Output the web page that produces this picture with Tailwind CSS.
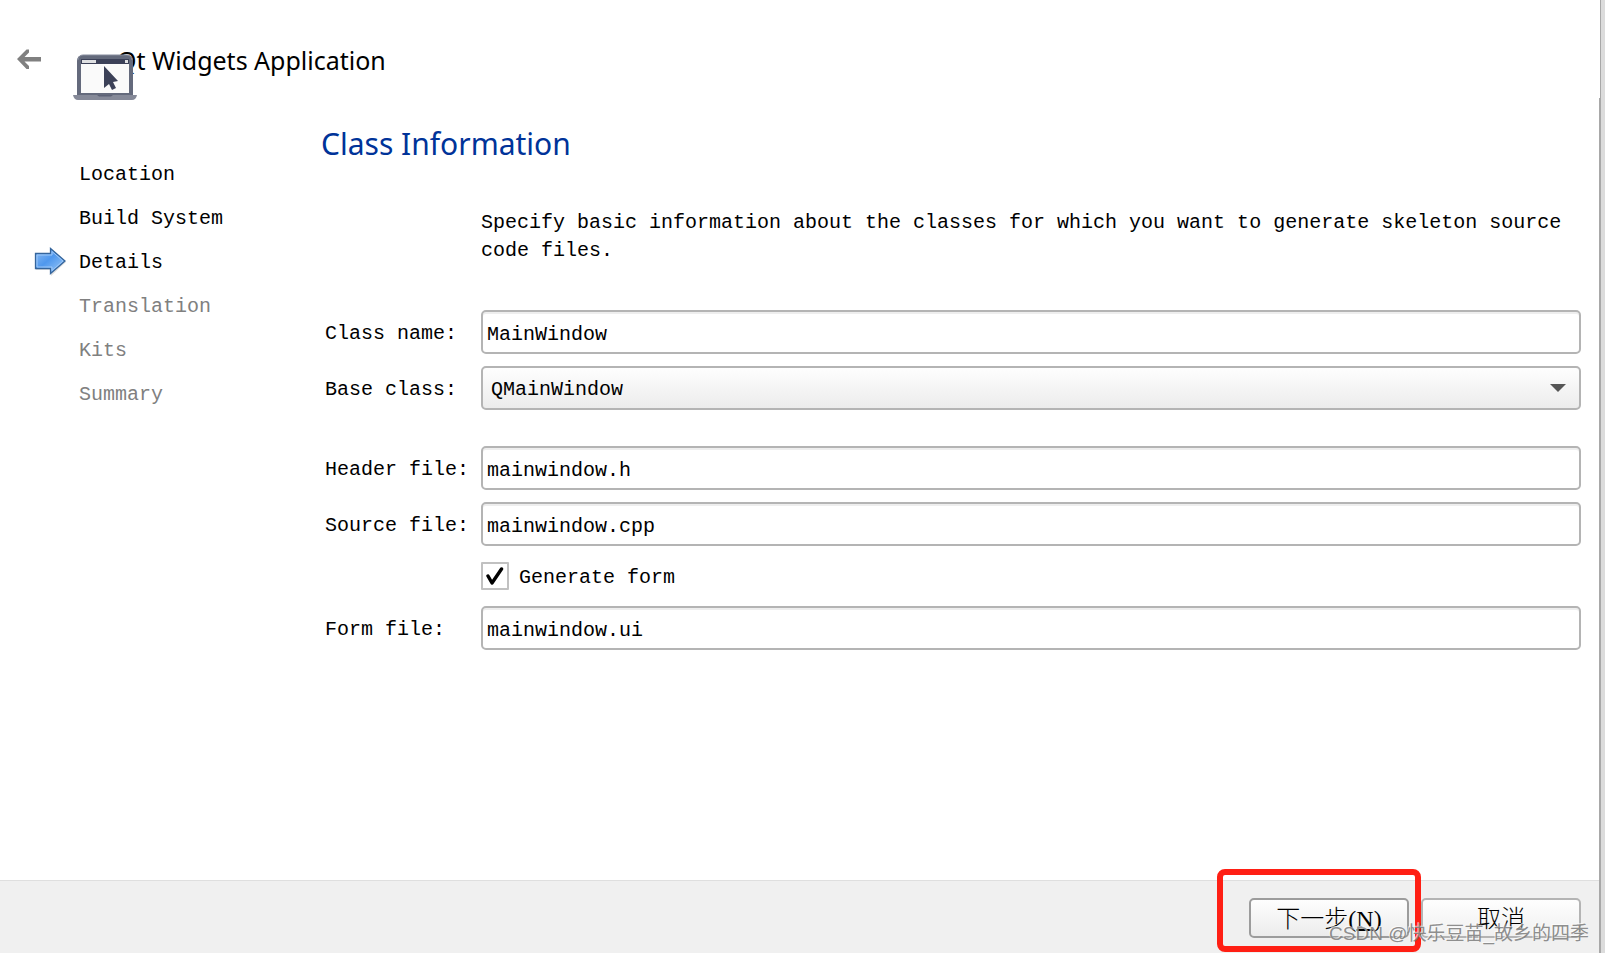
<!DOCTYPE html>
<html lang="zh-CN">
<head>
<meta charset="utf-8">
<title>Qt Widgets Application</title>
<script src="https://cdn.jsdelivr.net/npm/@tailwindcss/browser@4"></script>
</head>
<body class="bg-white">
<div class="relative flex min-h-screen bg-white font-['Liberation_Mono','Noto_Sans_CJK_SC',monospace] text-xl text-black">
  <div class="flex min-w-0 flex-1 flex-col">
    <header class="flex h-[112px] items-start pl-4 pt-[43px]">
      <button type="button" aria-label="Back" class="flex h-8 w-[26px] items-center justify-center">
        <svg class="h-[22px] w-[26px]" viewBox="0 0 26 22"><path d="M1 11 10.500 1.500h2.500v3L8.500 9H25v4.500H8.500L13 18v3h-2.500z" fill="#808080"/></svg>
      </button>
      <svg class="relative z-10 ml-[31px] mt-[10px] h-12 w-[65px] shrink-0" viewBox="0 0 65 48">
        <path d="M4 42V8q0-6 6-6h44q6 0 6 6v34z" fill="#646a7c"/>
        <path d="M5 7q1-5 5-5h44q4 0 5 5" fill="none" stroke="#858b9c" stroke-width="1"/>
        <rect x="8" y="6" width="48" height="34" fill="#fafafa"/>
        <rect x="8" y="6" width="48" height="5" fill="#3c4158"/>
        <rect x="9" y="7" width="14" height="3" fill="#dfe0e2"/>
        <rect x="52" y="7" width="3" height="3" fill="#dfe0e2"/>
        <path d="M31 13v22l5-4 3 6 4-2-3-6 5-1z" fill="#3c4158"/>
        <path d="M0 42h64q-1 5-5 5H5q-4 0-5-5z" fill="#858998"/>
        <path d="M24 42h16l-2 1.500H26z" fill="#5d6276"/>
      </svg>
      <h1 class="-ml-[21px] font-['Noto_Sans','Open_Sans',sans-serif] text-[25px] leading-[34px]">Qt Widgets Application</h1>
    </header>
    <main class="flex flex-1 items-start">
      <nav class="w-[321px] shrink-0 pt-[51px]">
        <ol class="flex flex-col gap-5 pl-[79px] leading-6">
          <li>Location</li>
          <li>Build System</li>
          <li class="-ml-[45px] flex items-center" aria-current="step">
            <svg class="-mb-1 -mt-2 mr-3 h-[29px] w-[33px]" viewBox="0 0 33 29">
              <defs><linearGradient id="arrow" x1="0" y1="0" x2="1" y2="1"><stop offset="0" stop-color="#8fbcf2"/><stop offset=".45" stop-color="#4f98ee"/><stop offset="1" stop-color="#a3cdf7"/></linearGradient></defs>
              <path d="M2 9h14V3l16 12-15 14v-6H2z" fill="#000" opacity=".13"/>
              <path d="M1.500 6.500h15V1.500L31 14 16.500 26.500v-5h-15z" fill="url(#arrow)" stroke="#35659c" stroke-width="1.300"/>
              <path d="M3 8h15V4.500L29 14 18 23.500V20H3z" fill="none" stroke="#9cc7f7" stroke-width="1"/>
            </svg>
            <span>Details</span>
          </li>
          <li class="text-[#808080]">Translation</li>
          <li class="text-[#808080]">Kits</li>
          <li class="text-[#808080]">Summary</li>
        </ol>
      </nav>
      <section class="min-w-0 flex-1 pr-[18px] pt-2">
        <h2 class="font-['Noto_Sans','Open_Sans',sans-serif] text-[30px] leading-12 text-[#003399]">Class Information</h2>
        <form class="mt-[41px] grid grid-cols-[160px_minmax(0,1fr)] items-center">
          <p class="col-start-2 mb-[45px] leading-7">Specify basic information about the classes for which you want to generate skeleton source code files.</p>
          <label for="cls" class="pl-1 pt-[3px]">Class name:</label>
          <input id="cls" type="text" value="MainWindow" class="h-11 w-full rounded-[5px] border-2 border-[#b4b4b4] bg-white pl-1 pt-1 shadow-[inset_0_2px_0_#eeeeee] outline-none">
          <label for="base" class="mt-3 pl-1 pt-[3px]">Base class:</label>
          <div class="relative mt-3">
            <select id="base" class="block h-11 w-full appearance-none rounded-[5px] border-2 border-[#b4b4b4] bg-linear-to-b from-[#fefefe] to-[#ececec] pl-2 pt-1 outline-none"><option>QMainWindow</option></select>
            <svg class="pointer-events-none absolute right-[15px] top-[18px] h-2 w-4" viewBox="0 0 16 8"><path d="M0 0h16L8 8z" fill="#565656"/></svg>
          </div>
          <label for="hdr" class="mt-9 pl-1 pt-[3px]">Header file:</label>
          <input id="hdr" type="text" value="mainwindow.h" class="mt-9 h-11 w-full rounded-[5px] border-2 border-[#b4b4b4] bg-white pl-1 pt-1 shadow-[inset_0_2px_0_#eeeeee] outline-none">
          <label for="src" class="mt-3 pl-1 pt-[3px]">Source file:</label>
          <input id="src" type="text" value="mainwindow.cpp" class="mt-3 h-11 w-full rounded-[5px] border-2 border-[#b4b4b4] bg-white pl-1 pt-1 shadow-[inset_0_2px_0_#eeeeee] outline-none">
          <div class="relative col-start-2 mt-4 flex h-7 items-center gap-[10px]">
            <input id="gen" type="checkbox" checked class="h-7 w-7 shrink-0 appearance-none rounded-[1px] border-2 border-[#c1c1c1] bg-white">
            <svg class="pointer-events-none absolute left-[5px] top-[5px] h-[19px] w-[18px]" viewBox="0 0 18 19"><path d="M2 9l4 7L15.500 2" fill="none" stroke="#000" stroke-width="3.400" stroke-linecap="round" stroke-linejoin="round"/></svg>
            <label for="gen" class="pt-1">Generate form</label>
          </div>
          <label for="ui" class="mt-4 pl-1 pt-[3px]">Form file:</label>
          <input id="ui" type="text" value="mainwindow.ui" class="mt-4 h-11 w-full rounded-[5px] border-2 border-[#b4b4b4] bg-white pl-1 pt-1 shadow-[inset_0_2px_0_#eeeeee] outline-none">
        </form>
      </section>
    </main>
    <footer class="flex h-[73px] justify-end gap-3 border-t border-[#dfdfdf] bg-[#f0f0f0] pr-[18px] pt-[17px]">
      <div class="relative">
        <button type="button" class="h-10 w-40 rounded-[5px] border-2 border-[#9c9c9c] bg-linear-to-b from-[#fefefe] to-[#ececec] pt-0.5 font-['Liberation_Serif','Noto_Sans_CJK_SC',serif] text-2xl font-light leading-8">下一步(<u>N</u>)</button>
        <div class="pointer-events-none absolute -left-8 -right-3 -top-[29px] h-[83px] rounded-lg border-6 border-[#ff1f14]"></div>
      </div>
      <button type="button" class="h-10 w-40 rounded-[5px] border-2 border-[#b4b4b4] bg-linear-to-b from-[#fefefe] to-[#f0f0f0] pt-0.5 font-['Liberation_Serif','Noto_Sans_CJK_SC',serif] text-2xl font-light leading-8">取消</button>
    </footer>
  </div>
  <div class="flex w-[6px] shrink-0 flex-col">
    <div class="ml-px h-[98px] border-l border-[#a8a8a8] bg-[#dcdcdc]"></div>
    <div class="flex-1 border-l-2 border-[#a8a8a8] bg-[#dcdcdc]"></div>
  </div>
  <p class="pointer-events-none absolute bottom-[5px] right-4 font-['Liberation_Sans','Noto_Sans_CJK_SC',sans-serif] text-[19px] leading-7 text-[#808080]/90 [text-shadow:-1px_-1px_0_#ffffffaa]">CSDN @快乐豆苗_故乡的四季</p>
</div>
</body>
</html>
